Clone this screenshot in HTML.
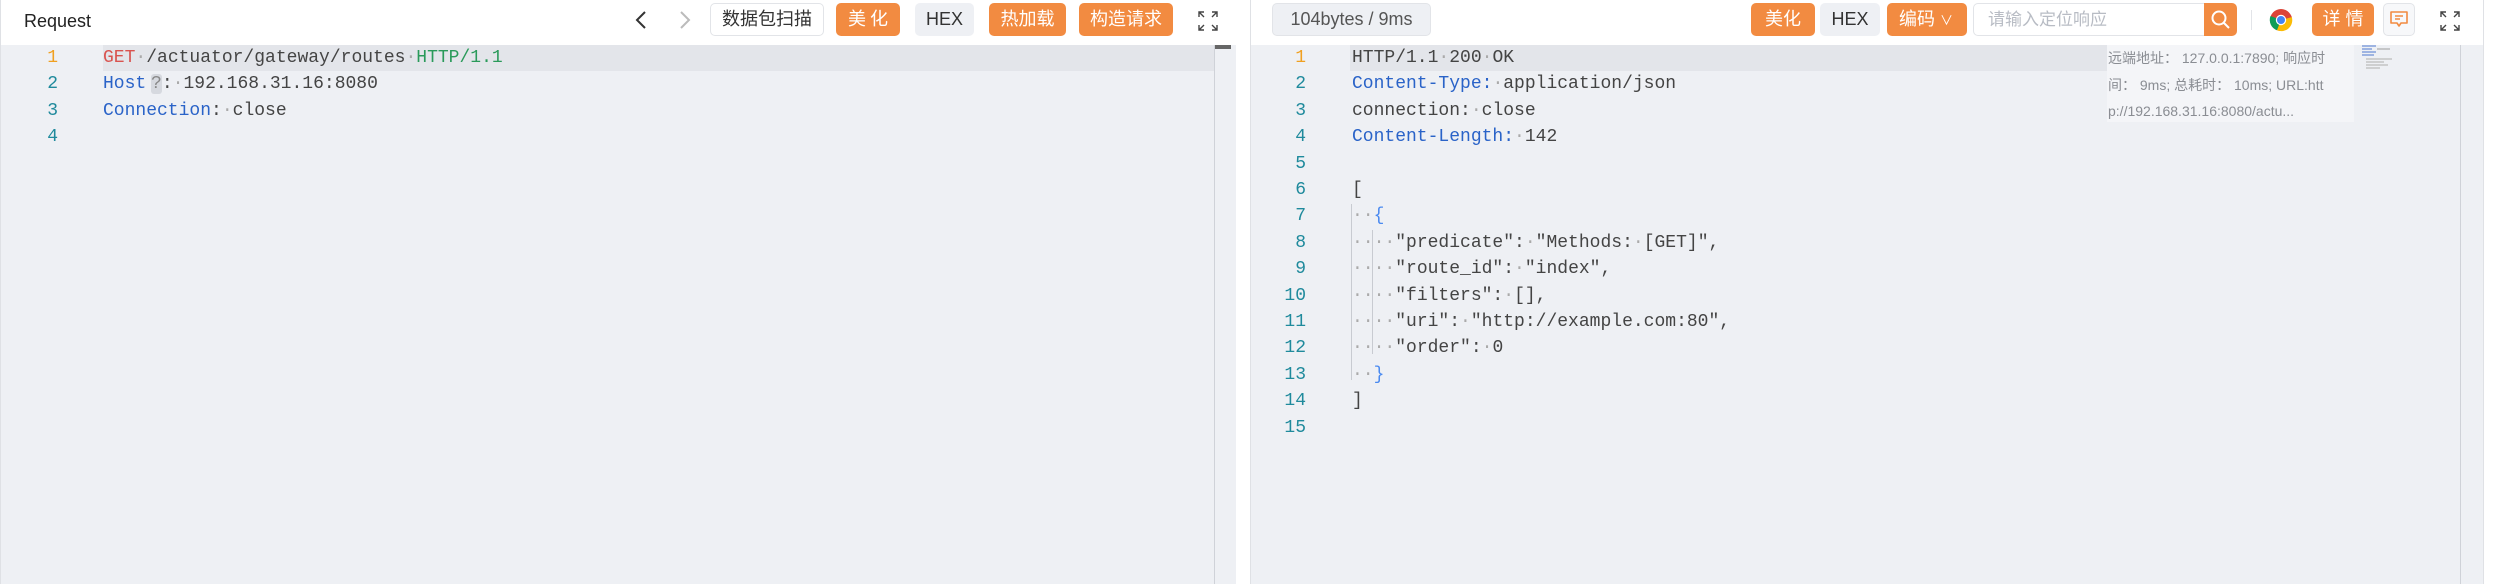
<!DOCTYPE html>
<html><head><meta charset="utf-8"><style>
*{margin:0;padding:0;box-sizing:border-box}
body{width:2502px;height:584px;background:#fff;position:relative;overflow:hidden;font-family:"Liberation Sans","Noto Sans CJK SC",sans-serif}
.abs{position:absolute}
.ed{background:#eef0f4}
.btn{position:absolute;top:3px;height:33px;border-radius:5px;font-size:18px;line-height:33px;text-align:center;color:#333}
.or{background:#f28b41;color:#fff}
.gr{background:#eef0f4;color:#333}
.code{position:absolute;font-family:"Liberation Mono",monospace;font-size:18px;line-height:26.4px;white-space:pre;color:#444}
.ln{position:absolute;font-family:"Liberation Mono",monospace;font-size:18px;line-height:26.4px;text-align:right;color:#1f8a9c;white-space:pre}
.d{color:#aaa}
.k{color:#2a63c8}
.r{color:#d9534f}
.g{color:#2a9a5a}
.b{color:#4a8af0}
</style></head><body>
<!-- LEFT PANEL -->
<div class="abs" style="left:0;top:0;width:1236px;height:584px;border-left:1px solid #dfe1e5"></div>
<div class="abs" style="left:24px;top:0;line-height:42px;font-size:18px;color:#222">Request</div>
<svg class="abs" style="left:634px;top:10px" width="14" height="20"><path d="M11 2 L3 10 L11 18" fill="none" stroke="#333" stroke-width="2"/></svg>
<svg class="abs" style="left:678px;top:10px" width="14" height="20"><path d="M3 2 L11 10 L3 18" fill="none" stroke="#bbb" stroke-width="2"/></svg>
<div class="btn" style="left:710px;width:114px;border:1px solid #e2e4e8;line-height:31px">数据包扫描</div>
<div class="btn or" style="left:836px;width:64px;letter-spacing:4px;text-indent:4px">美化</div>
<div class="btn gr" style="left:915px;width:59px">HEX</div>
<div class="btn or" style="left:989px;width:77px">热加载</div>
<div class="btn or" style="left:1079px;width:94px">构造请求</div>
<svg class="abs" style="left:1198px;top:11px" width="20" height="20"><g fill="none" stroke="#444" stroke-width="1.4"><path d="M1 6V1H6M1 1L6 6M14 1H19V6M19 1L14 6M1 14V19H6M1 19L6 14M14 19H19V14M19 19L14 14"/></g></svg>
<div class="abs ed" style="left:1px;top:45px;width:1235px;height:539px"></div>
<div class="abs" style="left:103px;top:45px;width:1111px;height:26px;background:#e3e5ea"></div>
<div class="abs" style="left:1214px;top:45px;width:1px;height:539px;background:#cfd2d8"></div>
<div class="abs" style="left:1215px;top:45px;width:16px;height:4px;background:#666"></div>
<div class="ln" style="left:28px;top:45px;width:30px"><span style="color:#f0a020">1</span>
2
3
4</div>
<div class="code" style="left:103px;top:45px"><span class="r">GET</span><span class="d">·</span>/actuator/gateway/routes<span class="d">·</span><span class="g">HTTP/1.1</span>
<span class="k">Host</span> <span style="background:#d6d9df;color:#888;border-radius:3px;margin-left:-6px">?</span>:<span class="d">·</span>192.168.31.16:8080
<span class="k">Connection</span>:<span class="d">·</span>close
</div>
<!-- RIGHT PANEL -->
<div class="abs" style="left:1250px;top:0;width:1234px;height:584px;border-left:1px solid #dfe1e5;border-right:1px solid #dfe1e5"></div>
<div class="btn gr" style="left:1272px;width:159px;border:1px solid #e2e4e8;color:#555;line-height:31px">104bytes / 9ms</div>
<div class="btn or" style="left:1751px;width:64px">美化</div>
<div class="btn gr" style="left:1820px;width:60px">HEX</div>
<div class="btn or" style="left:1887px;width:80px;text-align:left;padding-left:12px">编码 <span style="font-size:13px">&#x2228;</span></div>
<div class="abs" style="left:1973px;top:3px;width:232px;height:33px;border:1px solid #e2e4e8;border-radius:5px 0 0 5px;font-size:17px;line-height:31px;color:#b8bcc4;padding-left:14px">请输入定位响应</div>
<div class="abs" style="left:2204px;top:3px;width:33px;height:33px;background:#f28b41;border-radius:0 5px 5px 0"></div>
<svg class="abs" style="left:2210px;top:9px" width="22" height="22"><circle cx="9" cy="9" r="6.5" fill="none" stroke="#fff" stroke-width="2"/><path d="M14 14L19 19" stroke="#fff" stroke-width="2"/></svg>
<div class="abs" style="left:2251px;top:10px;width:1px;height:20px;background:#e2e4e8"></div>
<svg class="abs" style="left:2269px;top:8px" width="24" height="24" viewBox="0 0 24 24"><circle cx="12" cy="12" r="11" fill="#db4437"/><path d="M12 12 L1.5 8 A11 11 0 0 0 8 22.3Z" fill="#0f9d58"/><path d="M12 12 L8 22.3 A11 11 0 0 0 22.8 9Z" fill="#fbbc05"/><path d="M12 12 L22.8 9 A11 11 0 0 0 21 6Z" fill="#db4437"/><circle cx="12" cy="12" r="5.2" fill="#fff"/><circle cx="12" cy="12" r="4" fill="#4285f4"/></svg>
<div class="btn or" style="left:2312px;width:62px;letter-spacing:5px;text-indent:5px">详情</div>
<div class="btn" style="left:2383px;width:32px;border:1px solid #e2e4e8;background:#f7f8fa"></div>
<svg class="abs" style="left:2389px;top:9px" width="20" height="20"><path d="M2 3H18V14H12L10 17L8 14H2Z" fill="none" stroke="#f28b41" stroke-width="1.6" stroke-linejoin="round"/><path d="M6 7H14M6 10H11" stroke="#f28b41" stroke-width="1.5"/></svg>
<svg class="abs" style="left:2440px;top:11px" width="20" height="20"><g fill="none" stroke="#444" stroke-width="1.4"><path d="M1 6V1H6M1 1L6 6M14 1H19V6M19 1L14 6M1 14V19H6M1 19L6 14M14 19H19V14M19 19L14 14"/></g></svg>
<div class="abs ed" style="left:1251px;top:45px;width:1232px;height:539px"></div>
<div class="abs" style="left:1350px;top:45px;width:757px;height:26px;background:#e3e5ea"></div>
<div class="abs" style="left:2460px;top:45px;width:1px;height:539px;background:#cfd2d8"></div>
<div class="ln" style="left:1266px;top:45px;width:40px"><span style="color:#f0a020">1</span>
2
3
4
5
6
7
8
9
10
11
12
13
14
15</div>
<div class="abs" style="left:1351px;top:204px;width:1px;height:176px;background:#c8cbd1"></div>
<div class="abs" style="left:1372px;top:230px;width:1px;height:124px;background:#c8cbd1"></div>
<div class="code" style="left:1352px;top:45px">HTTP/1.1<span class="d">·</span>200<span class="d">·</span>OK
<span class="k">Content-Type:</span><span class="d">·</span>application/json
connection:<span class="d">·</span>close
<span class="k">Content-Length:</span><span class="d">·</span>142

[
<span class="d">··</span><span class="b">{</span>
<span class="d">····</span>"predicate":<span class="d">·</span>"Methods:<span class="d">·</span>[GET]",
<span class="d">····</span>"route_id":<span class="d">·</span>"index",
<span class="d">····</span>"filters":<span class="d">·</span>[],
<span class="d">····</span>"uri":<span class="d">·</span>"http://example.com:80",
<span class="d">····</span>"order":<span class="d">·</span>0
<span class="d">··</span><span class="b">}</span>
]
</div>
<div class="abs" style="left:2107px;top:45px;width:247px;height:77px;background:#f4f5f8;font-size:14px;line-height:26.5px;color:#8a8d93;padding-left:1px;white-space:nowrap;overflow:hidden">远端地址： 127.0.0.1:7890; 响应时<br>间： 9ms; 总耗时： 10ms; URL:htt<br>p://192.168.31.16:8080/actu...</div>
<svg class="abs" style="left:2362px;top:45px" width="40" height="28"><g stroke-width="1.2"><path d="M0 1H14M0 4H10M0 7H14M0 10H12" stroke="#6e8fd8"/><path d="M15 4H28" stroke="#aaa"/><path d="M4 14H30M4 17H22M4 20H26M4 23H18" stroke="#bbb"/></g></svg>
</body></html>
